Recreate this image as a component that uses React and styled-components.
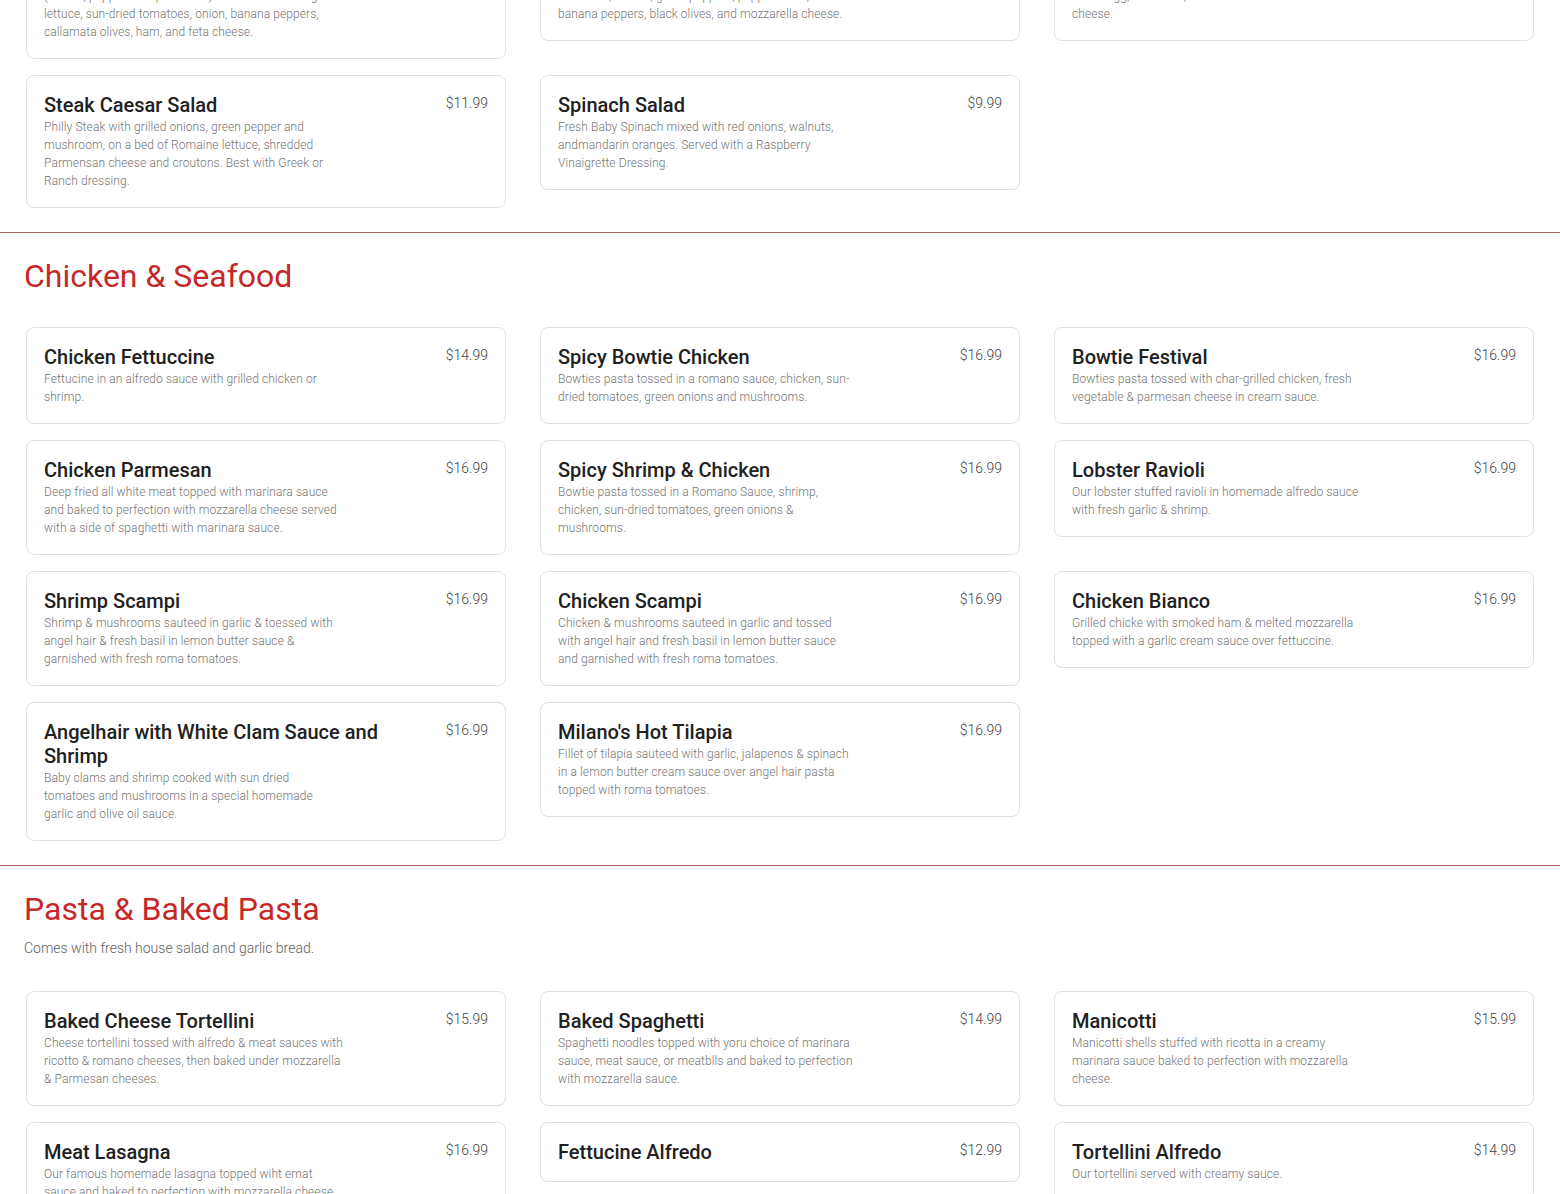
import React from "react";
import styled, { createGlobalStyle } from "styled-components";

const menu = [
  {
    title: "Salads",
    items: [
      {
        name: "Greek Salad",
        price: "$10.99",
        desc: "Crisp greens tossed with tomatoes and cucumbers,\n(salami, pepperoni & provolone) on a bed of iceberg\nlettuce, sun-dried tomatoes, onion, banana peppers, callamata olives, ham, and feta cheese.",
      },
      {
        name: "Italian Salad",
        price: "$10.99",
        desc: "Romaine lettuce with ham, salami and pepperoni,\ntomatoes, onions, green peppers, pepperoncini,\nbanana peppers, black olives, and mozzarella cheese.",
      },
      {
        name: "Chef Salad",
        price: "$10.99",
        desc: "Fresh garden salad topped with turkey and ham,\nboiled egg, tomatoes, cucumbers and shredded\ncheese.",
      },
      {
        name: "Steak Caesar Salad",
        price: "$11.99",
        desc: "Philly Steak with grilled onions, green pepper and mushroom, on a bed of Romaine lettuce, shredded Parmensan cheese and croutons. Best with Greek or Ranch dressing.",
      },
      {
        name: "Spinach Salad",
        price: "$9.99",
        desc: "Fresh Baby Spinach mixed with red onions, walnuts, andmandarin oranges. Served with a Raspberry Vinaigrette Dressing.",
      },
    ],
  },
  {
    title: "Chicken & Seafood",
    items: [
      { name: "Chicken Fettuccine", price: "$14.99", desc: "Fettucine in an alfredo sauce with grilled chicken or shrimp." },
      { name: "Spicy Bowtie Chicken", price: "$16.99", desc: "Bowties pasta tossed in a romano sauce, chicken, sun-dried tomatoes, green onions and mushrooms." },
      { name: "Bowtie Festival", price: "$16.99", desc: "Bowties pasta tossed with char-grilled chicken, fresh vegetable & parmesan cheese in cream sauce." },
      { name: "Chicken Parmesan", price: "$16.99", desc: "Deep fried all white meat topped with marinara sauce and baked to perfection with mozzarella cheese served with a side of spaghetti with marinara sauce." },
      { name: "Spicy Shrimp & Chicken", price: "$16.99", desc: "Bowtie pasta tossed in a Romano Sauce, shrimp, chicken, sun-dried tomatoes, green onions & mushrooms." },
      { name: "Lobster Ravioli", price: "$16.99", desc: "Our lobster stuffed ravioli in homemade alfredo sauce with fresh garlic & shrimp." },
      { name: "Shrimp Scampi", price: "$16.99", desc: "Shrimp & mushrooms sauteed in garlic & toessed with angel hair & fresh basil in lemon butter sauce & garnished with fresh roma tomatoes." },
      { name: "Chicken Scampi", price: "$16.99", desc: "Chicken & mushrooms sauteed in garlic and tossed\nwith angel hair and fresh basil in lemon butter sauce\nand garnished with fresh roma tomatoes." },
      { name: "Chicken Bianco", price: "$16.99", desc: "Grilled chicke with smoked ham & melted mozzarella topped with a garlic cream sauce over fettuccine." },
      { name: "Angelhair with White Clam Sauce and Shrimp", price: "$16.99", desc: "Baby clams and shrimp cooked with sun dried\ntomatoes and mushrooms in a special homemade\ngarlic and olive oil sauce." },
      { name: "Milano's Hot Tilapia", price: "$16.99", desc: "Fillet of tilapia sauteed with garlic, jalapenos & spinach in a lemon butter cream sauce over angel hair pasta topped with roma tomatoes." },
    ],
  },
  {
    title: "Pasta & Baked Pasta",
    note: "Comes with fresh house salad and garlic bread.",
    items: [
      { name: "Baked Cheese Tortellini", price: "$15.99", desc: "Cheese tortellini tossed with alfredo & meat sauces with ricotto & romano cheeses, then baked under mozzarella & Parmesan cheeses." },
      { name: "Baked Spaghetti", price: "$14.99", desc: "Spaghetti noodles topped with yoru choice of marinara sauce, meat sauce, or meatblls and baked to perfection with mozzarella sauce." },
      { name: "Manicotti", price: "$15.99", desc: "Manicotti shells stuffed with ricotta in a creamy marinara sauce baked to perfection with mozzarella cheese." },
      { name: "Meat Lasagna", price: "$16.99", desc: "Our famous homemade lasagna topped wiht emat\nsauce and baked to perfection with mozzarella cheese." },
      { name: "Fettucine Alfredo", price: "$12.99" },
      { name: "Tortellini Alfredo", price: "$14.99", desc: "Our tortellini served with creamy sauce." },
    ],
  },
];

const GlobalStyle = createGlobalStyle`
  * { box-sizing: border-box; }
  body {
    margin: 0;
    background: #ffffff;
    font-family: Roboto, "Liberation Sans", sans-serif;
    color: #212121;
    overflow: hidden;
  }
`;

// the screenshot is taken part way down the menu
const Page = styled.main`
  margin-top: -168px;
`;

const Section = styled.section`
  padding: 24px 0;
  border-top: ${(p) => (p.$divided ? "1px solid #b0625c" : "none")};
`;

const Header = styled.header`
  padding: 0 24px;
  margin-bottom: 32px;
`;

const Heading = styled.h2`
  margin: 0;
  font-size: 32px;
  line-height: 38px;
  font-weight: 400;
  color: #c62828;
`;

const Note = styled.p`
  margin: 9px 0 0;
  font-size: 14px;
  line-height: 22px;
  font-weight: 300;
  color: #616161;
`;

const Grid = styled.div`
  display: grid;
  grid-template-columns: repeat(3, 480px);
  column-gap: 34px;
  row-gap: 16px;
  align-items: start;
  padding: 0 26px;
`;

const Card = styled.article`
  background: #fff;
  border: 1px solid #e0e0e0;
  border-radius: 8px;
  padding: 17px;
`;

const CardTop = styled.div`
  display: flex;
  align-items: flex-start;
  gap: 16px;
`;

const Title = styled.h3`
  flex: 1;
  margin: 0;
  font-size: 20px;
  line-height: 24px;
  font-weight: 500;
  color: #212121;
`;

const Price = styled.span`
  flex-shrink: 0;
  font-size: 14px;
  line-height: 20px;
  font-weight: 300;
  color: #424242;
`;

const Desc = styled.p`
  margin: 1px 0 0;
  max-width: 300px;
  font-size: 12px;
  line-height: 18px;
  font-weight: 300;
  letter-spacing: 0.1px;
  color: #757575;
  white-space: pre-line;
`;

const MenuCard = ({ item }) => (
  <Card>
    <CardTop>
      <Title>{item.name}</Title>
      <Price>{item.price}</Price>
    </CardTop>
    {item.desc && <Desc>{item.desc}</Desc>}
  </Card>
);

export default function App() {
  return (
    <>
      <GlobalStyle />
      <Page>
        {menu.map((section, i) => (
          <Section key={section.title} $divided={i > 0}>
            <Header>
              <Heading>{section.title}</Heading>
              {section.note && <Note>{section.note}</Note>}
            </Header>
            <Grid>
              {section.items.map((item) => (
                <MenuCard key={item.name} item={item} />
              ))}
            </Grid>
          </Section>
        ))}
      </Page>
    </>
  );
}
